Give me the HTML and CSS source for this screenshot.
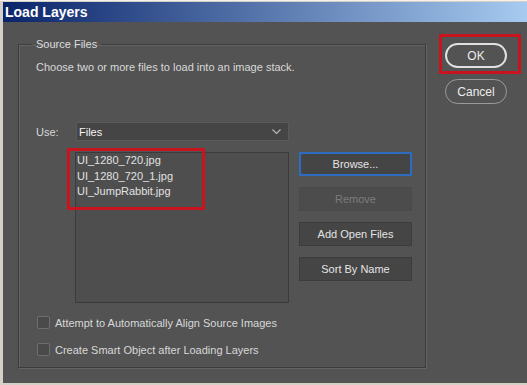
FILE: index.html
```html
<!DOCTYPE html>
<html lang="en">
<head>
    <meta charset="UTF-8">
    <title>Load Layers</title>
    <link rel="stylesheet" href="styles.css">
</head>
<body>
    <div class="window">
        <div class="titlebar">Load Layers</div>
        <div class="client">
            <fieldset class="group">
                <legend>Source Files</legend>
                <p class="hint">Choose two or more files to load into an image stack.</p>
                <div class="use-row">
                    <span class="use-label">Use:</span>
                    <div class="select">
                        <span>Files</span>
                        <svg width="9" height="5" viewBox="0 0 9 5"><path d="M0.5 0.5 L4.5 4.5 L8.5 0.5" fill="none" stroke="#b5b5b5" stroke-width="1.2"/></svg>
                    </div>
                </div>
                <div class="files-row">
                    <div class="file-list">
                        <div class="mark"></div>
                        <div class="file">UI_1280_720.jpg</div>
                        <div class="file">UI_1280_720_1.jpg</div>
                        <div class="file">UI_JumpRabbit.jpg</div>
                    </div>
                    <div class="actions">
                        <button class="btn focused">Browse...</button>
                        <button class="btn" disabled>Remove</button>
                        <button class="btn">Add Open Files</button>
                        <button class="btn">Sort By Name</button>
                    </div>
                </div>
                <label class="check"><span class="box"></span>Attempt to Automatically Align Source Images</label>
                <label class="check"><span class="box"></span>Create Smart Object after Loading Layers</label>
            </fieldset>
            <div class="side">
                <div class="mark-ok"><button class="pill ok">OK</button></div>
                <button class="pill cancel">Cancel</button>
            </div>
        </div>
    </div>
</body>
</html>
```

FILE: styles.css
```css
body {
    margin: 0;
    font-family: "Liberation Sans", Arial, sans-serif;
    font-size: 11px;
    color: #d8d8d8;
}
.window {
    width: 527px;
    height: 385px;
    box-sizing: border-box;
    padding: 1px 0 2px 3px;
    background: #d4d0c8;
    border-top: 1px solid #f4f2ea;
    display: flex;
    flex-direction: column;
}
.titlebar {
    height: 20px;
    line-height: 20px;
    padding-left: 2px;
    background: linear-gradient(to right, #0a246a, #a6caf0);
    color: #fff;
    font-weight: bold;
    font-size: 14px;
}
.client {
    flex: 1;
    background: #535353;
    display: flex;
    align-items: flex-start;
    padding: 12px 0 0 15px;
}
.group {
    margin: 3px 0 0 0;
    width: 408px;
    box-sizing: border-box;
    padding: 0 0 11px 17px;
    border: 1px solid #3c3c3c;
    box-shadow: 1px 1px 0 #646464, inset 1px 1px 0 #646464;
}
.group legend {
    margin-left: -4px;
    padding: 0 4px;
    line-height: 14px;
    color: #dcdcdc;
}
.hint {
    margin: 9px 0 0 0;
    line-height: 14px;
}
.use-row {
    display: flex;
    align-items: center;
    margin-top: 48px;
}
.use-label {
    width: 40px;
}
.select {
    width: 213px;
    height: 19px;
    box-sizing: border-box;
    background: #454545;
    border: 1px solid #5a5a5a;
    display: flex;
    align-items: center;
    justify-content: space-between;
    padding: 0 7px 0 2px;
    color: #f2f2f2;
}
.files-row {
    display: flex;
    gap: 10px;
    margin-top: 11px;
    padding-left: 39px;
}
.file-list {
    position: relative;
    width: 214px;
    height: 151px;
    box-sizing: border-box;
    background: #4e4e4e;
    border: 1px solid #3b3b3b;
    padding: 0 0 0 1px;
    line-height: 15.5px;
    color: #e2e2e2;
}
.file-list .mark {
    position: absolute;
    left: -9px;
    top: -5px;
    width: 138px;
    height: 62px;
    box-sizing: border-box;
    border: 3px solid #c8141e;
}
.actions {
    display: flex;
    flex-direction: column;
    gap: 11px;
}
.btn {
    width: 113px;
    height: 24px;
    box-sizing: border-box;
    background: #454545;
    border: 1px solid #3c3c3c;
    color: #e4e4e4;
    font: inherit;
    padding: 0;
}
.btn.focused {
    border: 2px solid #2e6cbf;
}
.btn:disabled {
    background: #4c4c4c;
    border-color: #4a4a4a;
    color: #7c7c7c;
}
.check {
    display: flex;
    align-items: center;
    gap: 5px;
    height: 13px;
    margin-top: 14px;
    padding-left: 1px;
}
.files-row + .check {
    margin-top: 13px;
}
.check .box {
    width: 13px;
    height: 13px;
    box-sizing: border-box;
    border: 1px solid #6e6e6e;
    border-radius: 2px;
    background: #4a4a4a;
}
.side {
    margin-left: 13px;
    display: flex;
    flex-direction: column;
}
.mark-ok {
    width: 82px;
    height: 40px;
    box-sizing: border-box;
    border: 3px solid #c8141e;
    padding: 3px 11px 0 3px;
    display: flex;
    align-items: center;
}
.pill {
    width: 62px;
    height: 25px;
    box-sizing: border-box;
    border-radius: 13px;
    background: #535353;
    color: #ececec;
    font: inherit;
    font-size: 12px;
    padding: 0;
}
.ok {
    border: 2px solid #e0e0e0;
}
.cancel {
    margin: 5px 0 0 6px;
    border: 1px solid #9a9a9a;
}
```
